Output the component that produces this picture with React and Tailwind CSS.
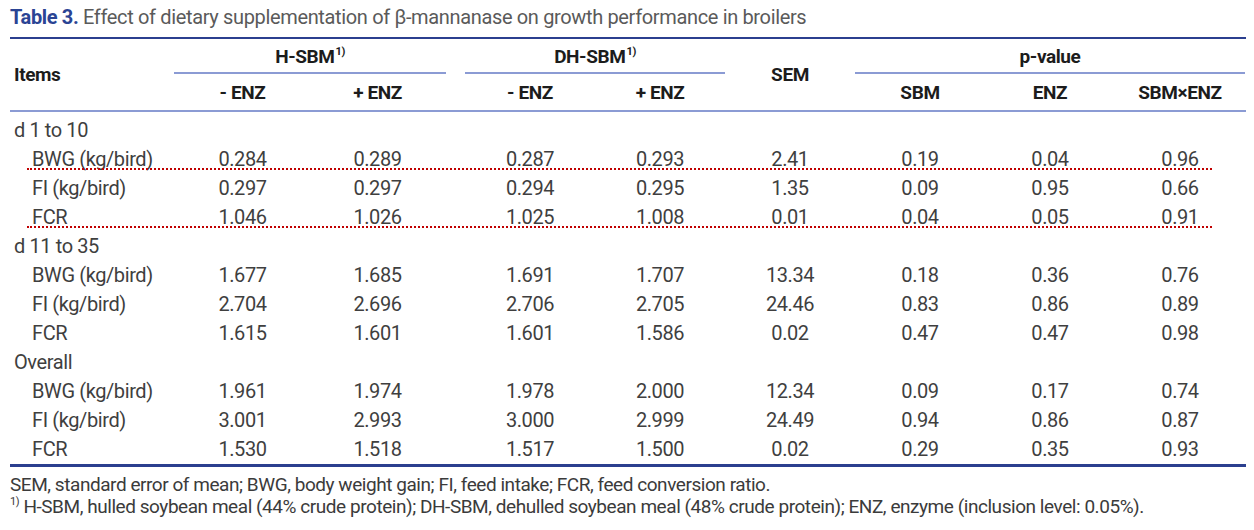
import React from "react";

const cols =
  "grid grid-cols-[165px_135px_135px_20px_130px_130px_130px_130px_130px_130px]";

const sections = [
  {
    label: "d 1 to 10",
    rows: [
      ["BWG (kg/bird)", "0.284", "0.289", "0.287", "0.293", "2.41", "0.19", "0.04", "0.96"],
      ["FI (kg/bird)", "0.297", "0.297", "0.294", "0.295", "1.35", "0.09", "0.95", "0.66"],
      ["FCR", "1.046", "1.026", "1.025", "1.008", "0.01", "0.04", "0.05", "0.91"],
    ],
  },
  {
    label: "d 11 to 35",
    rows: [
      ["BWG (kg/bird)", "1.677", "1.685", "1.691", "1.707", "13.34", "0.18", "0.36", "0.76"],
      ["FI (kg/bird)", "2.704", "2.696", "2.706", "2.705", "24.46", "0.83", "0.86", "0.89"],
      ["FCR", "1.615", "1.601", "1.601", "1.586", "0.02", "0.47", "0.47", "0.98"],
    ],
  },
  {
    label: "Overall",
    rows: [
      ["BWG (kg/bird)", "1.961", "1.974", "1.978", "2.000", "12.34", "0.09", "0.17", "0.74"],
      ["FI (kg/bird)", "3.001", "2.993", "3.000", "2.999", "24.49", "0.94", "0.86", "0.87"],
      ["FCR", "1.530", "1.518", "1.517", "1.500", "0.02", "0.29", "0.35", "0.93"],
    ],
  },
];

const Sup = () => (
  <sup className="text-[11px] font-bold relative -top-[8px] ml-[1px]">1)</sup>
);

const DataRow = ({ row, dotted }) => (
  <div className={`${cols} relative h-[29px] items-center`}>
    <div className="pl-[22px]">{row[0]}</div>
    <div className="text-center">{row[1]}</div>
    <div className="text-center">{row[2]}</div>
    <div />
    <div className="text-center">{row[3]}</div>
    <div className="text-center">{row[4]}</div>
    <div className="text-center">{row[5]}</div>
    <div className="text-center">{row[6]}</div>
    <div className="text-center">{row[7]}</div>
    <div className="text-center">{row[8]}</div>
    {dotted && (
      <div className="absolute left-[17px] right-[34px] bottom-[3px] border-b-2 border-dotted border-[#c00000]" />
    )}
  </div>
);

export default function App() {
  return (
    <div className="w-[1254px] h-[530px] bg-white font-['Roboto',sans-serif] tracking-[-0.4px] text-[#3f3f3f]">
      <div className="pl-[10px] pt-[3px] text-[20px] leading-[28px] tracking-[-0.35px] text-[#5a5a5a]">
        <span className="font-bold text-[#2a4494]">Table 3.</span> Effect of
        dietary supplementation of β-mannanase on growth performance in broilers
      </div>

      <div className="ml-[10px] w-[1236px] mt-[6px] border-t-2 border-[#2b3f8f]">
        {/* header */}
        <div className={`${cols} text-[19px] font-bold text-[#1c1c1c]`}>
          <div className="row-span-2 flex items-center pl-[4px] pt-[2px]">Items</div>
          <div className="col-span-2 h-[35px] mx-[-1px] flex items-center justify-center border-b-2 border-[#8b9bd4] pt-[3px]">
            <span>
              H-SBM
              <Sup />
            </span>
          </div>
          <div className="row-span-2" />
          <div className="col-span-2 h-[35px] flex items-center justify-center border-b-2 border-[#8b9bd4] pt-[3px]">
            <span>
              DH-SBM
              <Sup />
            </span>
          </div>
          <div className="row-span-2 flex items-center justify-center pt-[2px]">SEM</div>
          <div className="col-span-3 h-[35px] flex items-center justify-center border-b-2 border-[#8b9bd4] pt-[3px]">
            p-value
          </div>
          <div className="h-[36px] flex items-center justify-center pt-[2px]">- ENZ</div>
          <div className="h-[36px] flex items-center justify-center pt-[2px]">+ ENZ</div>
          <div className="h-[36px] flex items-center justify-center pt-[2px]">- ENZ</div>
          <div className="h-[36px] flex items-center justify-center pt-[2px]">+ ENZ</div>
          <div className="h-[36px] flex items-center justify-center pt-[2px]">SBM</div>
          <div className="h-[36px] flex items-center justify-center pt-[2px]">ENZ</div>
          <div className="h-[36px] flex items-center justify-center pt-[2px]">SBM×ENZ</div>
        </div>

        {/* body */}
        <div className="border-t-2 border-[#8b9bd4] pt-[3px] pb-[1px] text-[20px] border-b-[3px] border-b-[#2b3f8f]">
          {sections.map((s, si) => (
            <div key={si}>
              <div className="h-[29px] flex items-center pl-[4px]">{s.label}</div>
              {s.rows.map((r, ri) => (
                <DataRow
                  key={ri}
                  row={r}
                  dotted={si === 0 && (ri === 0 || ri === 2)}
                />
              ))}
            </div>
          ))}
        </div>
      </div>

      <div className="pl-[10px] pt-[7px] text-[19px] leading-[22px] tracking-[-0.45px] text-[#3b3b3b]">
        <div>
          SEM, standard error of mean; BWG, body weight gain; FI, feed intake;
          FCR, feed conversion ratio.
        </div>
        <div>
          <sup className="text-[11px] relative -top-[8px]">1)</sup> H-SBM, hulled
          soybean meal (44% crude protein); DH-SBM, dehulled soybean meal (48%
          crude protein); ENZ, enzyme (inclusion level: 0.05%).
        </div>
      </div>
    </div>
  );
}
